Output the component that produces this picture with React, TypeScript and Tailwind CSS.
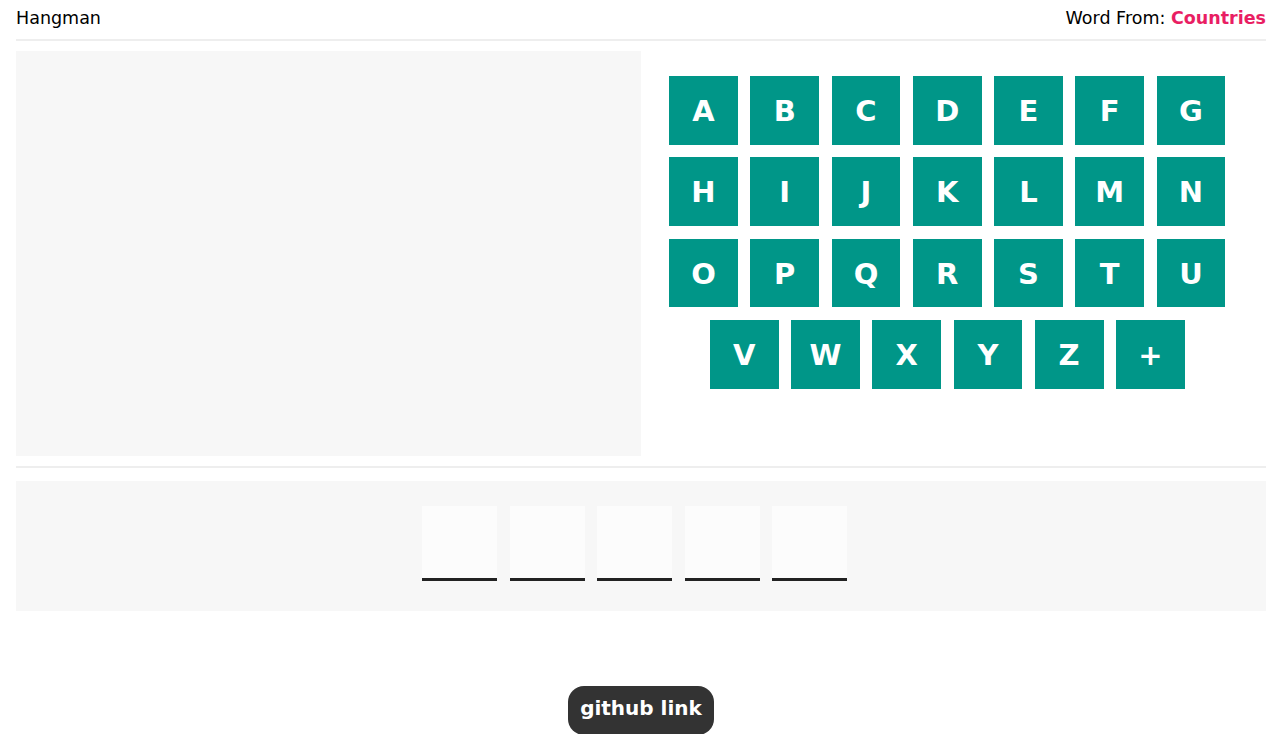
import React from 'react';

const rows = [
  ['A', 'B', 'C', 'D', 'E', 'F', 'G'],
  ['H', 'I', 'J', 'K', 'L', 'M', 'N'],
  ['O', 'P', 'Q', 'R', 'S', 'T', 'U'],
  ['V', 'W', 'X', 'Y', 'Z', '+'],
];

const slots = [0, 1, 2, 3, 4];

export default function App() {
  return (
    <div className="w-[1250px] ml-4 text-black" style={{ fontFamily: '"DejaVu Sans", Verdana, sans-serif' }}>
      {/* Header */}
      <header className="flex items-center justify-between h-[41px] border-b-2 border-[#eeeeee] text-[17.5px] pb-[2px]">
        <span>Hangman</span>
        <span>
          Word From: <b className="text-[#e91e63]">Countries</b>
        </span>
      </header>

      {/* Drawing + keyboard */}
      <div className="flex mt-[10px] border-b-2 border-[#eeeeee] pb-[10px]">
        <div className="w-[625px] h-[405px] bg-[#f7f7f7]" />
        <div className="w-[625px] pt-[25px] flex flex-col items-center">
          {rows.map((row, i) => (
            <div key={i} className="flex">
              {row.map((l) => (
                <button
                  key={l}
                  className="w-[68.75px] h-[68.75px] mr-[12.5px] mb-[12.5px] bg-[#009688] text-white font-bold text-[29px] flex items-center justify-center pt-[3px]"
                >
                  {l}
                </button>
              ))}
            </div>
          ))}
        </div>
      </div>

      {/* Word slots */}
      <div className="mt-[13px] h-[130px] bg-[#f7f7f7] flex items-start justify-center pt-[25px]">
        {slots.map((s) => (
          <div key={s} className="w-[75px] h-[75px] mr-[12.5px] bg-[#fcfcfc] border-b-[3px] border-[#222222]" />
        ))}
      </div>

      {/* Footer link */}
      <div className="flex justify-center mt-[75px]">
        <a className="bg-[#333333] text-white font-bold text-[20px] rounded-[16px] px-3 pt-[9px] pb-[14px] leading-[26px]">
          github link
        </a>
      </div>
    </div>
  );
}
